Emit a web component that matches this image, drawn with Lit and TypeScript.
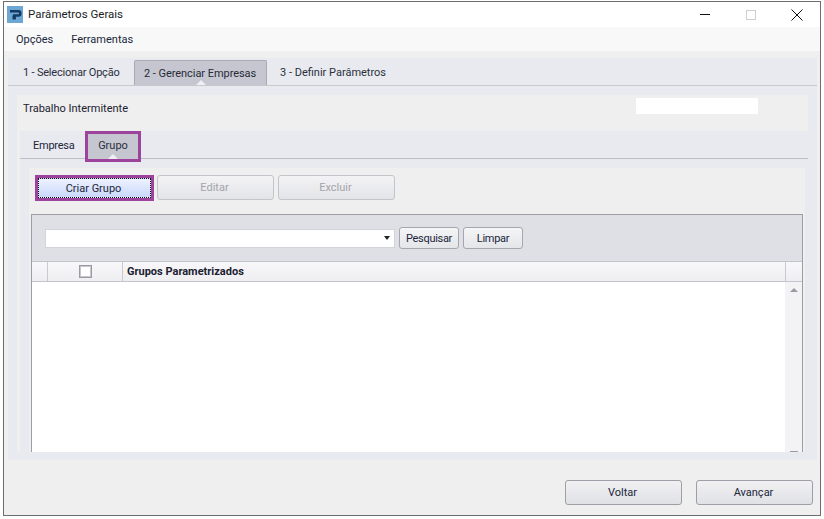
import { LitElement, html, css } from "lit";
import { customElement } from "lit/decorators.js";

@customElement("app-root")
export class AppRoot extends LitElement {
  static styles = css`
    :host { display: block; width: 824px; height: 519px; background: #fff; padding: 1px 0 0 3px; box-sizing: border-box; overflow: hidden;
      font: 11px/13px Roboto, sans-serif; color: #1c2130; }
    * { box-sizing: border-box; }
    .window { width: 818px; height: 515px; border: 1px solid #6d6d6d; background: #efefef; display: flex; flex-direction: column; }
    .title { height: 25px; background: #fff; display: flex; align-items: center; padding-left: 3px; flex: none; }
    .logo { width: 16px; height: 17px; margin-right: 5px; flex: none; display: block; }
    .title-text { flex: 1; color: #222; font-size: 11.5px; }
    .ctl { width: 46px; height: 25px; display: flex; align-items: center; justify-content: center; }
    .ctl svg { display: block; }
    .menu { height: 24px; background: #f8f8f8; display: flex; align-items: center; gap: 18px; padding-left: 12px; flex: none; color: #20263a; }
    .body { flex: 1; padding: 7px 3px 0 4px; display: flex; flex-direction: column; min-height: 0; }
    .outer { height: 402px; background: #e9eaef; display: flex; flex-direction: column; flex: none; }
    .tabs { height: 28px; display: flex; align-items: flex-end; padding-left: 2px; border-bottom: 1px solid #c6c7cf; flex: none; }
    .tab { height: 25px; width: 124px; padding-left: 13px; display: flex; align-items: center; position: relative; color: #2a2f40; white-space: nowrap; }
    .tab.tight { letter-spacing: -0.2px; }
    .tab.on { width: 133px; padding-left: 9px; background: #c5c6cf; border: 1px solid #a9aab4; border-bottom: 0; border-radius: 2px 2px 0 0; color: #272b3a; letter-spacing: -0.05px; }
    .tab.on::after { content: ""; position: absolute; left: 50%; bottom: 0; margin-left: -5px; border: 5px solid transparent; border-top: 0; border-bottom-color: #eff0f3; }
    .work { flex: 1; min-height: 0; padding: 9px 9px 8px 9px; display: flex; flex-direction: column; }
    .work-in { background: #efefef; flex: 1; min-height: 0; display: flex; flex-direction: column; }
    .trabalho { height: 36px; display: flex; align-items: flex-start; justify-content: space-between; padding: 3px 50px 0 6px; flex: none; }
    .trabalho span { margin-top: 4px; }
    .blank { width: 122px; height: 16px; background: #fff; }
    .inner { background: #e9eaef; flex: 1; min-height: 0; margin-left: 3px; display: flex; flex-direction: column; }
    .subtabs { height: 28px; display: flex; align-items: flex-end; padding-left: 1px; border-bottom: 1px solid #bcbdc6; flex: none; }
    .sub { height: 25px; width: 64px; padding-left: 12px; display: flex; align-items: center; color: #20263a; letter-spacing: -0.25px; }
    .subwrap { position: relative; height: 25px; width: 50px; margin-left: 3px; margin-bottom: -1px; padding-bottom: 2px; display: flex; align-items: center; justify-content: center; background: #c5c6cf; color: #2a2f40; outline: 3px solid #9c449c; }
    .subwrap::after { content: ""; position: absolute; left: 50%; bottom: 0; margin-left: -5px; border: 5px solid transparent; border-top: 0; border-bottom-color: #eff0f3; }
    .content { flex: 1; min-height: 0; margin: 9px 3px 0 9px; background: #efefef; display: flex; flex-direction: column; padding: 0 2px; }
    .actions { height: 46px; display: flex; padding: 7px 0 0 4px; flex: none; gap: 4px; }
    .btn { border: 1px solid #c4c5cb; border-radius: 3px; background: linear-gradient(#f3f3f5, #e3e4e8); width: 117px; height: 25px; display: flex; align-items: center; justify-content: center; color: #a3a4aa; padding-right: 2px; }
    .btn.primary { color: #20263a; width: 113px; height: 20px; margin: 3px 2px 0 3px; border: 1px dotted #111; border-radius: 0; background: linear-gradient(#eef2ff, #c9d8fb); outline: 3px solid #9c449c; }
    .grid { flex: 1; min-height: 0; border: 1px solid #9c9da6; border-bottom: 0; background: #fff; display: flex; flex-direction: column; }
    .search { height: 47px; background: #dfe0e5; display: flex; align-items: center; padding: 0 0 0 13px; flex: none; border-bottom: 1px solid #c4c5cc; }
    .combo { width: 350px; height: 19px; background: #fff; border: 1px solid #d3d4da; display: flex; align-items: center; justify-content: flex-end; padding-right: 4px; margin-right: 4px; }
    .arrow { width: 0; height: 0; border: 3.5px solid transparent; border-bottom: 0; border-top: 4px solid #222; }
    .sbtn { height: 22px; width: 60px; border: 1px solid #a5a6ae; border-radius: 3px; background: linear-gradient(#f5f5f7, #e4e5e9); display: flex; align-items: center; justify-content: center; margin-right: 4px; color: #20263a; letter-spacing: -0.3px; }
    .head { height: 20px; display: grid; grid-template-columns: 16px 75px 663px 1fr; background: linear-gradient(#f8f8fa, #eeeef1); border-bottom: 1px solid #c4c5cc; flex: none; }
    .head > div { border-right: 1px solid #c9cad0; display: flex; align-items: center; }
    .head > div:last-child { border-right: 0; }
    .c2 { justify-content: center; }
    .check { width: 13px; height: 13px; border: 1px solid #9a9ba3; background: #fff; box-shadow: inset 0 0 0 1px #c6c7cd; }
    .c3 { padding-left: 4px; font-weight: 700; color: #1c2130; }
    .rows { flex: 1; min-height: 0; display: flex; justify-content: flex-end; }
    .scroll { width: 17px; background: #f3f3f5; display: flex; flex-direction: column; justify-content: space-between; align-items: center; padding: 6px 0 0; overflow: hidden; }
    .up { width: 0; height: 0; border: 4px solid transparent; border-top: 0; border-bottom: 4px solid #9a9ba2; }
    .down { width: 8px; height: 1px; background: #9a9ba2; }
    .footer { flex: 1; display: flex; justify-content: flex-end; align-items: flex-start; gap: 14px; padding: 20px 4px 0 0; }
    .fbtn { width: 117px; height: 25px; border: 1px solid #9d9ea6; border-radius: 3px; background: linear-gradient(#f1f1f3, #e0e1e6); display: flex; align-items: center; justify-content: center; color: #20263a; padding-right: 2px; }
  `;

  render() {
    return html`
      <div class="window">
        <div class="title">
          <svg class="logo" viewBox="0 0 16 17">
            <rect width="16" height="17" fill="#6da5d3"/>
            <path d="M3 5.3H11.5Q13.2 5.3 13.2 6.8V8Q13.2 9.5 11.5 9.5H6" fill="none" stroke="#123a63" stroke-width="2.6"/>
            <rect x="5.5" y="9.5" width="3.4" height="4" fill="#123a63"/>
          </svg>
          <span class="title-text">Parâmetros Gerais</span>
          <div class="ctl"><svg width="10" height="10"><rect x="0" y="4" width="10" height="1" fill="#111"/></svg></div>
          <div class="ctl"><svg width="10" height="10"><rect x=".5" y=".5" width="9" height="9" fill="none" stroke="#cfcfcf"/></svg></div>
          <div class="ctl"><svg width="12" height="12"><path d="M.5 .5L11.5 11.5M11.5 .5L.5 11.5" stroke="#111" fill="none"/></svg></div>
        </div>
        <div class="menu"><span>Opções</span><span>Ferramentas</span></div>
        <div class="body">
          <div class="outer">
            <div class="tabs">
              <div class="tab tight">1 - Selecionar Opção</div>
              <div class="tab on">2 - Gerenciar Empresas</div>
              <div class="tab">3 - Definir Parâmetros</div>
            </div>
            <div class="work">
              <div class="work-in">
                <div class="trabalho"><span>Trabalho Intermitente</span><div class="blank"></div></div>
                <div class="inner">
                  <div class="subtabs">
                    <div class="sub">Empresa</div>
                    <div class="subwrap">Grupo</div>
                  </div>
                  <div class="content">
                    <div class="actions">
                      <div class="btn primary">Criar Grupo</div>
                      <div class="btn">Editar</div>
                      <div class="btn">Excluir</div>
                    </div>
                    <div class="grid">
                      <div class="search">
                        <div class="combo"><span class="arrow"></span></div>
                        <div class="sbtn">Pesquisar</div>
                        <div class="sbtn">Limpar</div>
                      </div>
                      <div class="head">
                        <div></div>
                        <div class="c2"><span class="check"></span></div>
                        <div class="c3">Grupos Parametrizados</div>
                        <div></div>
                      </div>
                      <div class="rows"><div class="scroll"><span class="up"></span><span class="down"></span></div></div>
                    </div>
                  </div>
                </div>
              </div>
            </div>
          </div>
          <div class="footer">
            <div class="fbtn">Voltar</div>
            <div class="fbtn">Avançar</div>
          </div>
        </div>
      </div>
    `;
  }
}
